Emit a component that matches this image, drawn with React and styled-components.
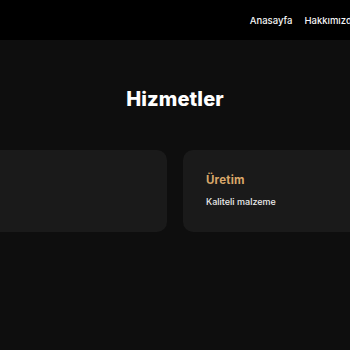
import React from 'react'
import { styled, createGlobalStyle } from 'styled-components'

const GlobalStyle = createGlobalStyle`
    body {
        margin: 0;
        background: #0e0e0e;
        font-family: "Inter", "Liberation Sans", sans-serif;
        overflow: hidden;
    }
`

const NAV = ['Anasayfa', 'Hakkımızda', 'Hizmetler', 'İletişim']

const SERVICES = [
    { id: 1, title: 'Tasarım', text: 'Modern ve şık tasarımlar' },
    { id: 2, title: 'Üretim', text: 'Kaliteli malzeme' }
]

const Header = styled.header`
    height: 40px;
    background: #000;
    display: flex;
    justify-content: center;
`

const HeaderInner = styled.div`
    width: 700px;
    flex-shrink: 0;
    display: flex;
    justify-content: space-between;
    align-items: center;
    padding: 0 68px 0 40px;
    box-sizing: border-box;
`

const Logo = styled.div`
    color: #fff;
    font-weight: 700;
    font-size: 14px;
`

const Nav = styled.nav`
    display: flex;
    gap: 12px;
`

const NavLink = styled.a`
    color: #f5f5f5;
    font-size: 9.5px;
    font-weight: 500;
    white-space: nowrap;
    text-decoration: none;
`

const Section = styled.section`
    padding: ${(props) => props.$top}px 0 66px;
    display: flex;
    flex-direction: column;
    align-items: center;
`

const Title = styled.h2`
    margin: 0 0 38px;
    color: #fff;
    font-size: 20px;
    line-height: 26px;
    font-weight: 800;
    letter-spacing: 0.1px;
`

const Cards = styled.div`
    display: flex;
    justify-content: center;
    gap: 16px;
    width: 100%;
`

const Card = styled.div`
    width: 300px;
    height: 82px;
    flex-shrink: 0;
    box-sizing: border-box;
    padding: 23px 23px;
    background: #1a1a1a;
    border-radius: 10px;
`

const CardTitle = styled.h3`
    margin: 0 0 9px;
    color: #d9a86a;
    font-size: 11.5px;
    line-height: 14px;
    font-weight: 700;
    letter-spacing: 0.2px;
`

const CardText = styled.p`
    margin: 0;
    color: #ececec;
    font-size: 9px;
    line-height: 12px;
    font-weight: 500;
`

function App() {
    return (
        <>
            <GlobalStyle />
            <Header>
                <HeaderInner>
                    <Logo>Firma</Logo>
                    <Nav>
                        {NAV.map(item => (
                            <NavLink key={item} href="#">{item}</NavLink>
                        ))}
                    </Nav>
                </HeaderInner>
            </Header>
            <Section $top={46}>
                <Title>Hizmetler</Title>
                <Cards>
                    {SERVICES.map(s => (
                        <Card key={s.id}>
                            <CardTitle>{s.title}</CardTitle>
                            <CardText>{s.text}</CardText>
                        </Card>
                    ))}
                </Cards>
            </Section>
            <Section $top={53}>
                <Title>Projeler</Title>
            </Section>
        </>
    )
}

export default App
